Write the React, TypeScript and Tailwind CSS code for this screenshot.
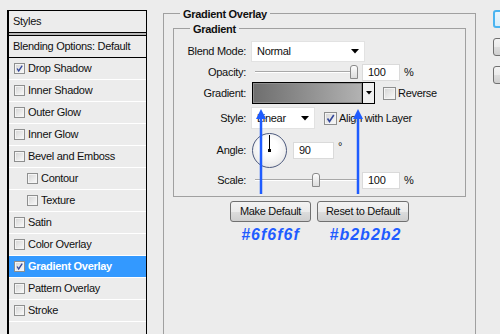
import React from 'react';

type Row = { label: string; checked?: boolean; indent?: boolean; selected?: boolean };

const rows: Row[] = [
  { label: 'Drop Shadow', checked: true },
  { label: 'Inner Shadow' },
  { label: 'Outer Glow' },
  { label: 'Inner Glow' },
  { label: 'Bevel and Emboss' },
  { label: 'Contour', indent: true },
  { label: 'Texture', indent: true },
  { label: 'Satin' },
  { label: 'Color Overlay' },
  { label: 'Gradient Overlay', checked: true, selected: true },
  { label: 'Pattern Overlay' },
  { label: 'Stroke' },
];

function Check({ checked, size = 11 }: { checked?: boolean; size?: number }) {
  return (
    <span
      className="relative block shrink-0 border border-[#8e8f8f] bg-gradient-to-br from-[#d4d4d4] to-[#fbfbfb] shadow-[inset_0_0_0_1px_#f4f4f4]"
      style={{ width: size, height: size }}
    >
      {checked && (
        <svg viewBox="0 0 11 11" className="absolute inset-0 h-full w-full">
          <path d="M2.5 5.5 L4.5 8.5 L8.8 2" fill="none" stroke="#34489c" strokeWidth="1.6" />
        </svg>
      )}
    </span>
  );
}

function Caret() {
  return (
    <svg width="8" height="5" viewBox="0 0 8 5">
      <path d="M0 0 H8 L4 4.5 Z" fill="#000" />
    </svg>
  );
}

function Label({ children }: { children: React.ReactNode }) {
  return <div className="w-[72px] shrink-0 text-right">{children}</div>;
}

function Slider({ pos }: { pos: number }) {
  return (
    <div className="relative h-full w-[107px] shrink-0">
      <div className="absolute left-[4px] right-0 top-1/2 h-[2px] -translate-y-1/2 border-t border-[#a8a8a8] bg-white" />
      <div
        className="absolute top-1/2 h-[14px] w-[8px] -translate-y-1/2 rounded-t-[3px] border border-[#8a8a8a] bg-gradient-to-b from-[#fdfdfd] to-[#dcdcdc]"
        style={{ left: pos }}
      />
    </div>
  );
}

function Field({ value, w }: { value: string; w: string }) {
  return (
    <div className={`h-[17px] ${w} shrink-0 border border-[#dadada] bg-white pl-[5px] leading-[15px]`}>{value}</div>
  );
}

function Button({ label, w }: { label: string; w: string }) {
  return (
    <div
      className={`flex h-[21px] ${w} items-center justify-center rounded-[3px] border border-[#707070] bg-[linear-gradient(#f3f3f3_0%,#ebebeb_50%,#dddddd_51%,#cfcfcf_100%)]`}
    >
      {label}
    </div>
  );
}

function Arrow({ x }: { x: number }) {
  return (
    <g>
      <line x1={x} y1={116} x2={x} y2={194} stroke="#1f5cff" strokeWidth="2.5" />
      <path d={`M${x - 5} ${119} L${x} ${109} L${x + 5} ${119} Z`} fill="#1f5cff" />
    </g>
  );
}

const note = "font-['Liberation_Sans',Arial,sans-serif] text-[16px] font-semibold italic tracking-[1px] text-[#1f5cff]";

export default function App() {
  return (
    <div className="relative flex h-[334px] w-[500px] overflow-hidden bg-[#ececec] font-['Liberation_Sans',Arial,sans-serif] text-[11px] tracking-[-0.3px] text-[#101010]">
      {/* styles list */}
      <div className="ml-[7px] mt-[10px] h-[340px] w-[140px] shrink-0 border border-l-2 border-black">
        <div className="flex h-[21px] items-center pl-[4px]">Styles</div>
        <div className="h-[1px] bg-black" />
        <div className="h-[2px] bg-[#b8b8b8]" />
        <div className="h-[1px] bg-black" />
        <div className="flex h-[22px] items-center border-b border-black pl-[4px]">Blending Options: Default</div>
        {rows.map((r) => (
          <div
            key={r.label}
            className={`flex h-[22px] items-center border-b border-white ${r.indent ? 'pl-[18px]' : 'pl-[5px]'} ${
              r.selected ? 'bg-[#3399ff] font-bold text-white' : ''
            }`}
          >
            <Check checked={r.checked} />
            <span className="ml-[3px]">{r.label}</span>
          </div>
        ))}
        <div className="h-[22px] border-b border-white" />
      </div>

      {/* gradient overlay group */}
      <div className="relative ml-[16px] mt-[13px] h-[340px] w-[313px] shrink-0 border border-[#a0a0a0] pl-[9px] pt-[14px]">
        <span className="absolute left-[16px] top-[-8px] bg-[#ececec] px-[3px] font-bold">Gradient Overlay</span>

        <div className="relative w-[293px] border border-[#a0a0a0] pb-[7px] pt-[12px]">
          <span className="absolute left-[16px] top-[-8px] bg-[#ececec] px-[3px] font-bold">Gradient</span>

          <div className="flex h-[21px] items-center">
            <Label>Blend Mode:</Label>
            <div className="ml-[5px] flex h-[21px] w-[114px] items-center justify-between border border-[#e2e2e2] bg-white pl-[5px] pr-[5px]">
              <span>Normal</span>
              <Caret />
            </div>
          </div>

          <div className="flex h-[20px] items-center">
            <Label>Opacity:</Label>
            <div className="ml-[5px] flex h-full items-center">
              <Slider pos={99} />
              <div className="ml-[4px]">
                <Field value="100" w="w-[38px]" />
              </div>
              <span className="ml-[4px]">%</span>
            </div>
          </div>

          <div className="flex h-[22px] items-center">
            <Label>Gradient:</Label>
            <div className="ml-[6px] flex h-[22px] w-[123px] border border-black">
              <div className="flex-1 border border-[#8d8d8d] bg-gradient-to-r from-[#6f6f6f] to-[#b2b2b2]" />
              <div className="flex w-[12px] items-center justify-center border-l border-black bg-[#f0f0f0]">
                <svg width="6" height="4" viewBox="0 0 6 4">
                  <path d="M0 0 H6 L3 3.5 Z" fill="#000" />
                </svg>
              </div>
            </div>
            <div className="ml-[8px]">
              <Check size={13} />
            </div>
            <span className="ml-[2px]">Reverse</span>
          </div>

          <div className="mt-[3px] flex h-[22px] items-center">
            <Label>Style:</Label>
            <div className="ml-[5px] flex h-[22px] w-[64px] items-center justify-between border border-[#e2e2e2] bg-white pl-[5px] pr-[5px]">
              <span>Linear</span>
              <Caret />
            </div>
            <div className="ml-[9px]">
              <Check checked size={13} />
            </div>
            <span className="ml-[2px]">Align with Layer</span>
          </div>

          <div className="mt-[3px] flex h-[36px] items-center">
            <Label>Angle:</Label>
            <div className="relative ml-[6px] h-[35px] w-[35px] shrink-0 rounded-full border border-[#4d5a7e] bg-[radial-gradient(circle_at_50%_40%,#ffffff_30%,#dedede_100%)]">
              <div className="absolute left-[16px] top-[1px] h-[16px] w-[1px] bg-black" />
              <div className="absolute left-[15px] top-[15px] h-[3px] w-[3px] bg-black" />
            </div>
            <div className="ml-[6px]">
              <Field value="90" w="w-[41px]" />
            </div>
            <span className="ml-[4px] self-start pt-[6px]">°</span>
          </div>

          <div className="mt-[3px] flex h-[18px] items-center">
            <Label>Scale:</Label>
            <div className="ml-[5px] flex h-full items-center">
              <Slider pos={61} />
              <div className="ml-[4px]">
                <Field value="100" w="w-[38px]" />
              </div>
              <span className="ml-[4px]">%</span>
            </div>
          </div>
        </div>

        <div className="ml-[57px] mt-[4px] flex gap-[6px]">
          <div className="flex flex-col items-center">
            <Button label="Make Default" w="w-[81px]" />
            <span className={`mt-[1px] ${note}`}>#6f6f6f</span>
          </div>
          <div className="flex flex-col items-center">
            <Button label="Reset to Default" w="w-[92px]" />
            <span className={`mt-[1px] pl-[5px] ${note}`}>#b2b2b2</span>
          </div>
        </div>
      </div>

      {/* dialog buttons, cut off at the edge */}
      <div className="ml-[17px] mt-[10px] flex shrink-0 flex-col gap-[10px]">
        <div className="h-[18px] w-[20px] rounded-l-[3px] border-2 border-[#4ab4f0] bg-gradient-to-b from-[#eaf6fd] to-[#d7eefb]" />
        <div className="h-[18px] w-[20px] rounded-l-[3px] border border-[#707070] bg-[linear-gradient(#f3f3f3_0%,#ebebeb_50%,#dddddd_51%,#cfcfcf_100%)]" />
        <div className="h-[18px] w-[20px] rounded-l-[3px] border border-[#707070] bg-[linear-gradient(#f3f3f3_0%,#ebebeb_50%,#dddddd_51%,#cfcfcf_100%)]" />
      </div>

      <svg className="pointer-events-none absolute inset-0" width="500" height="334">
        <Arrow x={261} />
        <Arrow x={358} />
      </svg>
    </div>
  );
}
